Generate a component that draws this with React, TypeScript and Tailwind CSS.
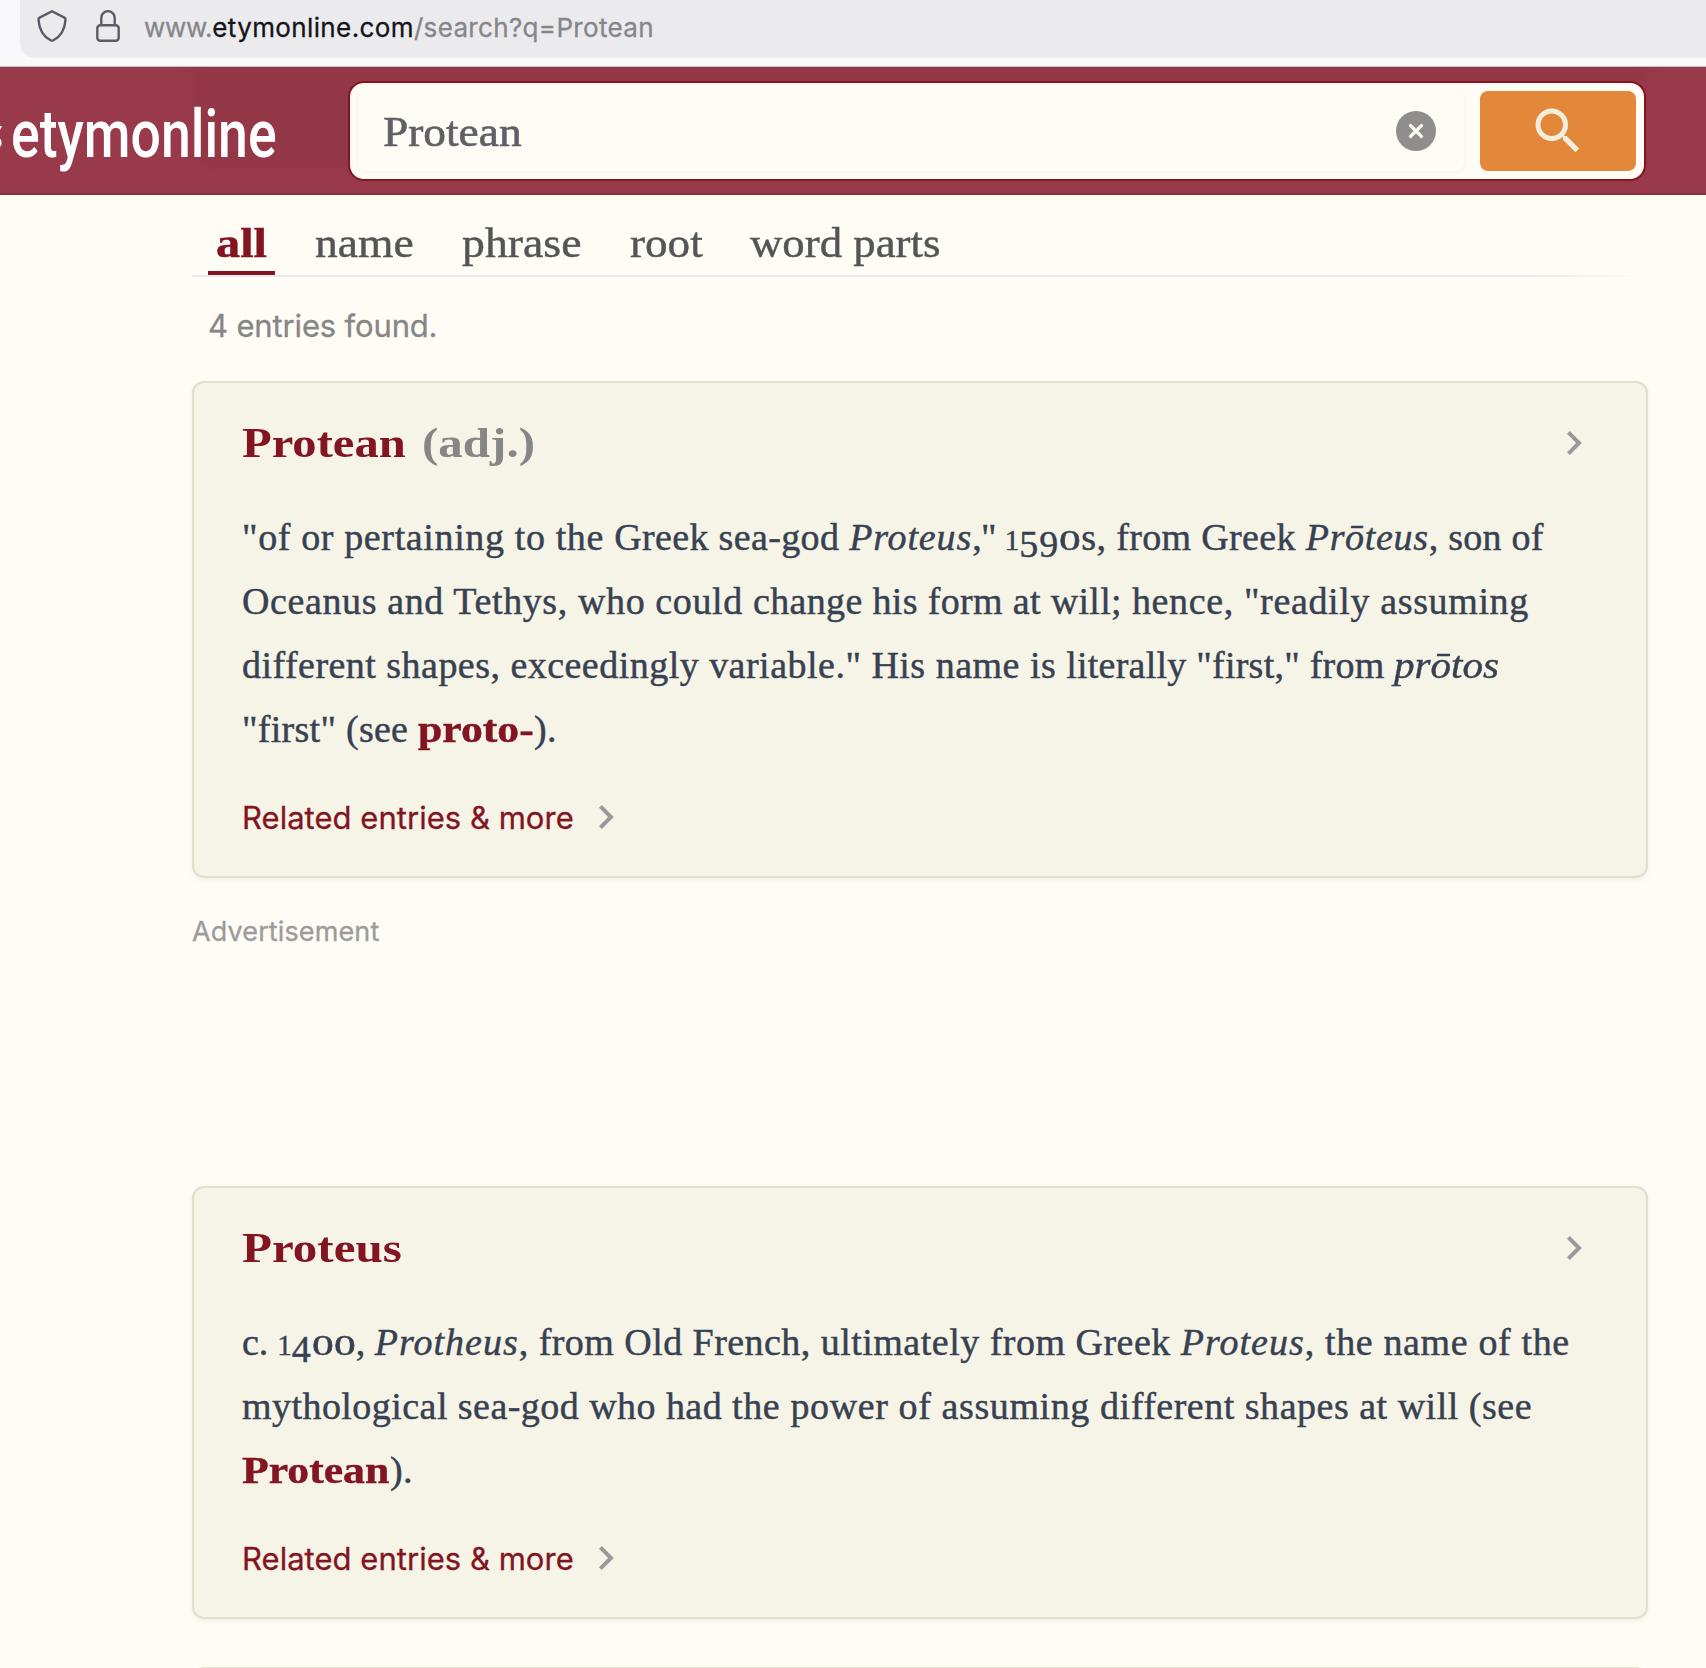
import type { ReactNode } from "react";
import { MdSearch } from "react-icons/md";

const serif = "font-['Liberation_Serif',serif]";
const sans = "font-['Inter',sans-serif]";

function Line({ children }: { children: ReactNode }) {
  return <span className="block h-16 whitespace-pre">{children}</span>;
}

/* Old-style numerals: 0 and 1 sit at x-height, the others hang below the baseline. */
function OldStyle({ digits }: { digits: string }) {
  return (
    <>
      {digits.split("").map((d, i) => {
        if (d === "1") return <span key={i} className="text-[29px] leading-none">{d}</span>;
        if (d === "0")
          return (
            <span key={i} className="inline-block w-[22px] origin-left scale-x-[1.5] text-[29px] leading-none">
              {d}
            </span>
          );
        return <span key={i} className="align-[-7px] leading-none tracking-[1px]">{d}</span>;
      })}
    </>
  );
}

function Chevron() {
  return (
    <svg width="18" height="26" viewBox="0 0 18 26" fill="none" stroke="#999999" strokeWidth="4">
      <path d="M2.4 2.4 L13 13 L2.4 23.6" />
    </svg>
  );
}

function Card({ title, children }: { title: ReactNode; children: ReactNode }) {
  return (
    <article className="h-fit rounded-[12px] border-2 border-[#e2dfcb] bg-[#f6f4e7] pt-[36px] pb-[38px] pl-12 shadow-[0_2px_5px_rgba(0,0,0,0.06)]">
      <div className="flex h-12 items-center justify-between pr-[62px]">
        <h2 className={`flex text-[43px] leading-[48px] font-bold whitespace-nowrap text-[#831422] ${serif}`}>{title}</h2>
        <Chevron />
      </div>
      <p className={`mt-[38px] text-[38px] leading-[64px] text-[#374151] [-webkit-text-stroke:0.45px] ${serif}`}>{children}</p>
      <a className={`mt-[37px] flex h-10 items-center text-[31px] leading-10 text-[#831422] [-webkit-text-stroke:0.3px] ${sans}`}>
        <span className="w-[356px] tracking-[0.03px]">Related entries &amp; more</span>
        <span className="-mt-0.5">
          <Chevron />
        </span>
      </a>
    </article>
  );
}

export default function App() {
  return (
    <div className="flex h-[1668px] w-[1706px] flex-col overflow-hidden bg-[#fffcf5]">
      <div className="h-[67px] shrink-0 border-b border-[#c3c6c6] bg-[#f9f9fb] pl-5">
        <div className={`flex h-[58px] rounded-bl-[15px] bg-[#ebebed] pl-4 text-[26px] ${sans}`}>
          <svg className="shrink-0" width="32" height="48" viewBox="36 0 32 48" fill="none" stroke="#5b5b66" strokeWidth="2.4" strokeLinejoin="round">
            <path d="M52 11.3 L64.4 17.6 Q65.6 18.3 65.5 19.8 C64.8 29.2 60.8 36.4 53.4 40.2 Q52 41 50.6 40.2 C43.2 36.4 39.2 29.2 38.5 19.8 Q38.4 18.3 39.6 17.6 Z" />
          </svg>
          <svg className="ml-6 shrink-0" width="32" height="48" viewBox="92 0 32 48" fill="none" stroke="#5b5b66" strokeWidth="2.4">
            <rect x="97.3" y="25.2" width="21.4" height="15.5" rx="3" />
            <path d="M101.3 25 V17.8 A6.7 6.7 0 0 1 114.7 17.8 V25" />
          </svg>
          <div className="ml-5 flex h-[55px] items-center whitespace-nowrap text-[#86868a] [-webkit-text-stroke:0.3px]">
            <span className="tracking-[-0.3px]">www.</span>
            <span className="tracking-[0.38px] text-[#15141a]">etymonline.com</span>
            <span className="tracking-[0.34px]">/search?q=Protean</span>
          </div>
        </div>
      </div>

      <header className="relative flex h-32 shrink-0 items-start overflow-hidden border-b-2 border-[#8b3040] bg-[#983a4a]">
        <div className="absolute -top-6 right-[58px] left-[192px] h-[126px] rounded-[20px] bg-[#943746] blur-[6px]" />
        <svg className="relative mt-[58px] shrink-0" width="11" height="24" viewBox="0 0 11 24" fill="#ffffff">
          <path d="M0 1 H2 L0 5 Z M0 13.5 Q1.6 15 1.6 18 Q1.6 20.5 0 22 Z" />
        </svg>
        <div className="relative mt-[27px] w-[337px]">
          <span className="inline-block origin-left scale-x-[0.8] font-['Roboto',sans-serif] text-[67px] leading-[80px] font-medium text-white">
            etymonline
          </span>
        </div>
        <div className="relative mt-3.5 flex h-[100px] w-[1298px] shrink-0 gap-4 rounded-[16px] border-2 border-[#831422] bg-[#fffcf5] p-2">
          <div className="flex flex-1 items-center justify-between rounded-[8px] pr-7 pl-[25px] shadow-[0_1px_4px_rgba(0,0,0,0.05)]">
            <span className={`mt-0.5 origin-left scale-x-[1.08] text-[42px] leading-[48px] text-[#5f5f66] [-webkit-text-stroke:0.6px] ${serif}`}>
              Protean
            </span>
            <span className="flex size-10 items-center justify-center rounded-full bg-[#8f8e8d]">
              <svg width="16" height="16" viewBox="0 0 16 16" stroke="#fffcf5" strokeWidth="3.4" strokeLinecap="round">
                <path d="M2.6 2.6 L13.4 13.4 M13.4 2.6 L2.6 13.4" />
              </svg>
            </span>
          </div>
          <button className="flex w-[156px] items-center justify-center rounded-[8px] bg-[#e3873b]">
            <MdSearch size={60} color="#f3eddc" />
          </button>
        </div>
      </header>

      <main className="ml-48 w-[1456px] shrink-0">
        <nav className={`mt-6 flex h-14 gap-8 pl-4 text-[42px] leading-[48px] whitespace-nowrap text-[#555555] [-webkit-text-stroke:0.45px] ${serif}`}>
          <span className="w-[67px] border-b-4 border-[#831422] pl-2 text-[#831422]">
            <span className="inline-block origin-left scale-x-[1.15] font-bold">all</span>
          </span>
          <span className="w-[115px] pl-2">
            <span className="inline-block origin-left scale-x-[1.085]">name</span>
          </span>
          <span className="w-[136px] pl-2">
            <span className="inline-block origin-left scale-x-[1.09]">phrase</span>
          </span>
          <span className="w-[89px] pl-2">
            <span className="inline-block origin-left scale-x-[1.075]">root</span>
          </span>
          <span className="pl-[7px]">
            <span className="inline-block origin-left scale-x-[1.067]">word parts</span>
          </span>
        </nav>
        <div className="h-0.5 bg-linear-to-r from-[#e9eaec] from-92% to-transparent" />
        <div className={`mt-[29px] mb-[35px] h-10 pl-4 text-[31px] leading-10 tracking-[-0.15px] text-[#868686] [-webkit-text-stroke:0.3px] ${sans}`}>
          4 entries found.
        </div>

        <Card
          title={
            <>
              <span className="w-[180px] origin-left scale-x-[1.13]">Protean</span>
              <span className="origin-left scale-x-[1.14] text-[#868686]">(adj.)</span>
            </>
          }
        >
          <Line>
            <span className="tracking-[0.63px]">"of or pertaining to the </span>
            <span className="tracking-[0.36px]">Greek sea-god </span>
            <em className="tracking-[0.88px]">Proteus</em>
            <span className="tracking-[-0.6px]">," </span>
            <OldStyle digits="1590" />
            <span className="tracking-[0.35px]">s, from Greek </span>
            <em className="tracking-[0.68px]">Prōteus</em>
            <span className="tracking-[0.26px]">, son of</span>
          </Line>
          <Line>
            <span className="tracking-[0.61px]">Oceanus and Tethys, who could </span>
            <span className="tracking-[0.34px]">change his form at will; </span>
            <span className="tracking-[0.64px]">hence, "readily assuming</span>
          </Line>
          <Line>
            <span className="tracking-[0.47px]">different shapes, exceedingly </span>
            <span className="tracking-[0.49px]">variable." His name is </span>
            <span className="tracking-[0.24px]">literally "first," from </span>
            <em className="inline-block w-[105px] origin-left scale-x-[1.08] leading-none">prōtos</em>
          </Line>
          <Line>
            <span className="tracking-[0.28px]">"first" (see </span>
            <b className="inline-block w-[116px] origin-left scale-x-[1.15] leading-none text-[#831422]">proto-</b>
            <span className="tracking-[0.4px]">).</span>
          </Line>
        </Card>

        <div className={`mt-[38px] h-8 text-[27px] leading-8 tracking-[0.12px] text-[#9b9b9b] [-webkit-text-stroke:0.3px] ${sans}`}>
          Advertisement
        </div>

        <div className="mt-[238px]">
          <Card title={<span className="origin-left scale-x-[1.14]">Proteus</span>}>
            <Line>
              <span className="tracking-[-0.2px]">c. </span>
              <OldStyle digits="1400" />
              <span>, </span>
              <em className="tracking-[1.02px]">Protheus</em>
              <span className="tracking-[0.45px]">, from Old French, </span>
              <span className="tracking-[0.49px]">ultimately from Greek </span>
              <em className="tracking-[1.03px]">Proteus</em>
              <span className="tracking-[0.63px]">, the name of the</span>
            </Line>
            <Line>
              <span className="tracking-[0.45px]">mythological sea-god who had </span>
              <span className="tracking-[0.61px]">the power of assuming </span>
              <span className="tracking-[0.51px]">different shapes at will (see</span>
            </Line>
            <Line>
              <b className="inline-block w-[148px] origin-left scale-x-[1.15] leading-none text-[#831422]">Protean</b>
              <span className="tracking-[0.4px]">).</span>
            </Line>
          </Card>
        </div>

        <div className="mt-[48px] h-20 rounded-[12px] border-2 border-[#e2dfcb] bg-[#f6f4e7]" />
      </main>
    </div>
  );
}
